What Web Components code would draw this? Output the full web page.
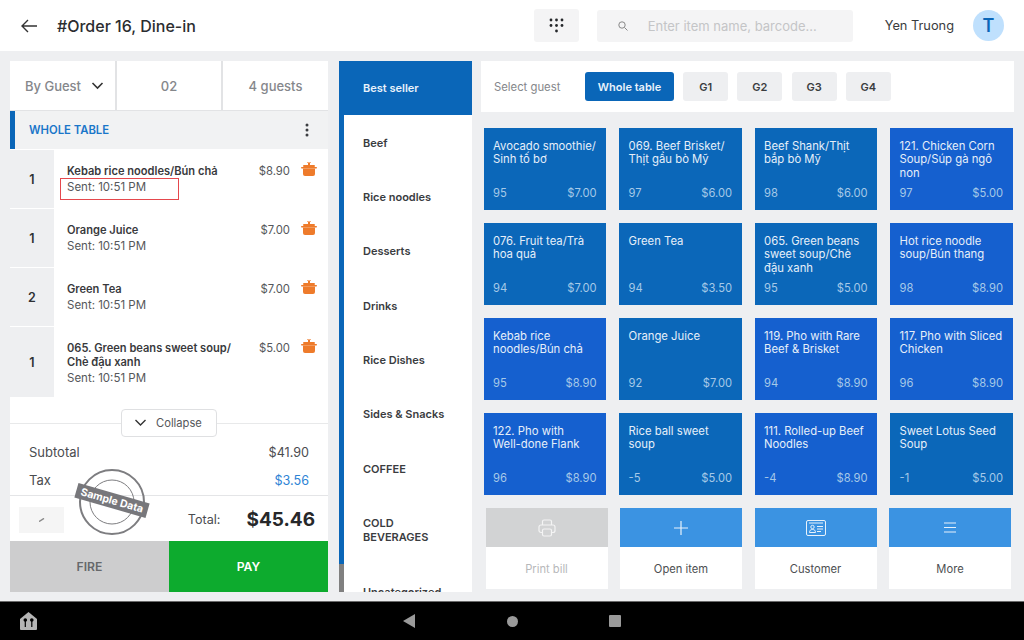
<!DOCTYPE html>
<html>
<head>
<meta charset="utf-8">
<title>Order 16</title>
<style>
  html, body {
    margin: 0;
    height: 100%;
    overflow: hidden;
    background: #eeeff1;
    font-family: Inter, "Liberation Sans", sans-serif;
  }
  body {
    display: flex;
    flex-direction: column;
    height: 640px;
  }
</style>
</head>
<body>
<pos-top-bar></pos-top-bar>
<pos-main></pos-main>
<pos-nav-bar></pos-nav-bar>

<script>
/**
 * Data shown on the page.
 */
const orderItems = [
  { qty: 1, name: 'Kebab rice noodles/Bún chả', price: '$8.90', height: 58 },
  { qty: 1, name: 'Orange Juice', price: '$7.00', height: 58 },
  { qty: 2, name: 'Green Tea', price: '$7.00', height: 58 },
  { qty: 1, name: '065. Green beans sweet soup/ Chè đậu xanh', price: '$5.00', height: 70 }
]

const categories = ['Best seller', 'Beef', 'Rice noodles', 'Desserts', 'Drinks', 'Rice Dishes', 'Sides &amp; Snacks', 'COFFEE', 'COLD BEVERAGES', 'Uncategorized']

const tiles = [
  ['Avocado smoothie/ Sinh tố bơ', '95', '$7.00', 0], ['069. Beef Brisket/ Thịt gầu bò Mỹ', '97', '$6.00', 0], ['Beef Shank/Thịt bắp bò Mỹ', '98', '$6.00', 0], ['121. Chicken Corn Soup/Súp gà ngô non', '97', '$5.00', 1],
  ['076. Fruit tea/Trà hoa quả', '94', '$7.00', 0], ['Green Tea', '94', '$3.50', 0], ['065. Green beans sweet soup/Chè đậu xanh', '95', '$5.00', 0], ['Hot rice noodle soup/Bún thang', '98', '$8.90', 1],
  ['Kebab rice noodles/Bún chả', '95', '$8.90', 1], ['Orange Juice', '92', '$7.00', 0], ['119. Pho with Rare Beef &amp; Brisket', '94', '$8.90', 1], ['117. Pho with Sliced Chicken', '96', '$8.90', 1],
  ['122. Pho with <span style="white-space:nowrap">Well-done</span> Flank', '96', '$8.90', 1], ['Rice ball sweet soup', '-5', '$5.00', 0], ['111. Rolled-up Beef Noodles', '-4', '$8.90', 1], ['Sweet Lotus Seed Soup', '-1', '$5.00', 0]
]

const potIcon = `<svg width="16" height="15" viewBox="0 0 16 15" fill="#ee7b2b">
  <rect x="6" y="0" width="4" height="1" opacity=".6"/><rect x="7" y="1" width="2" height="2"/>
  <rect x="2" y="3" width="12" height="2" rx="1"/><rect x="0" y="5" width="16" height="1.5" rx=".7"/>
  <path d="M2 6.5h12V12a2 2 0 0 1-2 2H4a2 2 0 0 1-2-2z"/></svg>`

/**
 * Small helper, every element here only needs a shadow root filled once.
 *
 * @param {HTMLElement} el - The element.
 * @param {string} html - Markup with styles.
 */
function fill (el, html) {
  el.attachShadow({ mode: 'open' }).innerHTML = html
}

customElements.define('pos-top-bar', class extends HTMLElement {
  constructor () {
    super()
    const dots = [[0, 0], [5.5, 0], [11, 0], [0, 5.5], [5.5, 5.5], [11, 5.5], [5.5, 11]].map(([x, y]) => `<circle cx="${x + 2}" cy="${y + 2}" r="1.4"/>`).join('')
    fill(this, `<style>
      :host { display: flex; align-items: center; height: 51px; background: #fff; flex: none; }
      .back { margin-left: 20px; width: 18px; height: 14px; display: block; }
      h1 { margin: 0 0 0 19px; font-size: 16px; font-weight: 500; color: #2b2d30; flex: 1; white-space: nowrap; }
      .keys { width: 45px; height: 33px; background: #f4f4f5; border-radius: 3px; display: flex; align-items: center; justify-content: center; }
      .search { margin-left: 18px; width: 256px; height: 32px; background: #f4f4f5; border-radius: 3px; display: flex; align-items: center; box-sizing: border-box; padding-left: 21px; font-size: 13px; color: #c4c5c7; }
      .search svg { margin-right: 20px; }
      .user { margin-left: 32px; font-size: 12.8px; color: #3a3c40; }
      .avatar { margin: 0 20px 0 19px; width: 31px; height: 31px; border-radius: 50%; background: #bfe0fd; color: #0a66b8; font-size: 18px; font-weight: 600; display: flex; align-items: center; justify-content: center; }
    </style>
    <svg class="back" viewBox="0 0 18 14" fill="none" stroke="#333" stroke-width="1.4"><path d="M17 7H2M8 1 2 7l6 6"/></svg>
    <h1>#Order 16, Dine-in</h1>
    <div class="keys"><svg width="15" height="15" viewBox="0 0 15 15" fill="#26282b">${dots}</svg></div>
    <div class="search">
      <svg width="10" height="10" viewBox="0 0 10 10" fill="none" stroke="#888" stroke-width="1"><circle cx="4" cy="4" r="3.2"/><path d="m6.5 6.5 3 3"/></svg>
      Enter item name, barcode...
    </div>
    <div class="user">Yen Truong</div>
    <div class="avatar">T</div>`)
  }
})

customElements.define('pos-main', class extends HTMLElement {
  constructor () {
    super()
    fill(this, `<style>
      :host { display: flex; flex: none; height: 550px; box-sizing: border-box; padding: 10px 10px 9px 10px; }
      .right { margin-left: 9px; width: 533px; display: flex; flex-direction: column; }
    </style>
    <pos-order-panel></pos-order-panel>
    <pos-category-list></pos-category-list>
    <div class="right">
      <pos-guest-bar></pos-guest-bar>
      <pos-item-grid></pos-item-grid>
      <pos-action-row></pos-action-row>
    </div>`)
  }
})

customElements.define('pos-order-panel', class extends HTMLElement {
  constructor () {
    super()
    const rows = orderItems.map((item, i) => `
      <div class="row" style="height:${item.height}px">
        <div class="qty">${item.qty}</div>
        <div class="info">
          <div class="name">${item.name}</div>
          <div class="sent">Sent: 10:51 PM</div>
        </div>
        <div class="price">${item.price}</div>
        <div class="pot">${potIcon}</div>
      </div>`).join('')
    fill(this, `<style>
      :host { display: flex; flex-direction: column; width: 318px; height: 531px; position: relative; background: #fff; color: #2f3134; flex: none; }
      .tabs { display: flex; height: 50px; background: #e2e3e5; gap: 2px; padding-bottom: 1px; box-sizing: border-box; flex: none; }
      .tab { background: #fff; display: flex; align-items: center; justify-content: center; font-size: 13px; font-weight: 500; color: #85878b; box-sizing: border-box; }
      .tab svg { margin-left: 10px; }
      .head { height: 38px; flex: none; background: #f1f2f3; border-left: 5px solid #0a66b8; box-sizing: border-box; display: flex; align-items: center; justify-content: space-between; padding: 0 19px 0 14px; font-size: 11.3px; font-weight: 600; color: #1976c9; margin-bottom: 1px; }
      .head svg { display: block; }
      .row { display: flex; box-sizing: border-box; margin-bottom: 1px; }
      .qty { width: 44px; background: #eeeff1; flex: none; display: flex; align-items: center; justify-content: center; font-size: 12.5px; font-weight: 600; box-sizing: border-box; }
      .info { width: 170px; margin-left: 13px; padding-top: 15px; box-sizing: border-box; }
      .name { font-size: 11.1px; font-weight: 600; line-height: 13.5px; color: #38393c; }
      .sent { font-size: 11.5px; line-height: 13.5px; margin-top: 2.5px; color: #55575a; }
      .price { margin-left: auto; padding-top: 15px; font-size: 11.3px; line-height: 13.5px; color: #55575a; }
      .pot { margin: 11px 11px 0 11px; }
      .list { flex: none; height: 274px; }
      .collapse-wrap { height: 0; border-top: 1.5px solid #e8e9ea; position: relative; margin-top: -1px; flex: none; }
      .collapse { position: absolute; left: 111px; top: -15px; width: 96px; height: 28px; box-sizing: border-box; background: #fff; border: 1px solid #dfe0e2; border-radius: 4px; display: flex; align-items: center; padding-left: 12px; font-size: 11.2px; color: #55575a; }
      .collapse svg { margin-right: 9px; }
      .sum { flex: none; height: 70.5px; padding: 0 19px; display: flex; flex-direction: column; font-size: 12.6px; color: #4a4c4f; box-sizing: border-box; }
      .line { display: flex; justify-content: space-between; height: 29px; align-items: center; }
      .line:first-child { margin-top: 14px; }
      .line span:first-child { font-size: 13px; }
      .tax { color: #2d83d5; }
      .total { flex: none; height: 46px; border-top: 1px solid #e4e5e7; box-sizing: border-box; display: flex; align-items: center; padding: 2px 13px 0 9px; }
      .scan { width: 45px; height: 26px; background: #f5f5f5; display: flex; align-items: center; justify-content: center; margin-top: 2px; }
      .tl { margin-left: auto; font-size: 12.6px; color: #4a4c4f; margin-top: 1px; }
      .amt { margin-left: 26px; font-size: 19px; font-weight: 700; color: #27282a; }
      .btns { flex: none; height: 51px; display: flex; font-size: 12.2px; font-weight: 600; }
      .btns div { flex: 1; display: flex; align-items: center; justify-content: center; }
      .fire { background: #cdcdce; color: #66686b; }
      .pay { background: #0dab2e; color: #fff; }
      .mark { position: absolute; left: 50px; top: 117px; width: 119px; height: 22px; box-sizing: border-box; border: 1px solid #e5484d; }
      .stamp { position: absolute; left: 65px; top: 407px; width: 76px; height: 68px; }
    </style>
    <div class="tabs">
      <div class="tab" style="width:105px;padding-left:4px">By Guest<svg width="13" height="8" viewBox="0 0 13 8" fill="none" stroke="#333" stroke-width="1.6"><path d="m1.5 1 5 5 5-5"/></svg></div>
      <div class="tab" style="width:104px">02</div>
      <div class="tab" style="width:105px">4 guests</div>
    </div>
    <div class="head">WHOLE TABLE<svg width="4" height="14" viewBox="0 0 4 14" fill="#3c3e41"><circle cx="2" cy="2" r="1.5"/><circle cx="2" cy="7" r="1.5"/><circle cx="2" cy="12" r="1.5"/></svg></div>
    <div class="list">${rows}</div>
    <div class="collapse-wrap"><div class="collapse"><svg width="13" height="8" viewBox="0 0 13 8" fill="none" stroke="#333" stroke-width="1.4"><path d="m1.5 1 5 5 5-5"/></svg>Collapse</div></div>
    <div class="sum">
      <div class="line"><span>Subtotal</span><span>$41.90</span></div>
      <div class="line"><span>Tax</span><span class="tax">$3.56</span></div>
    </div>
    <div class="total">
      <div class="scan"><svg width="6" height="4" viewBox="0 0 6 4"><path d="M0 3.6 5 .4" stroke="#8a8a8a" stroke-width="1.4"/></svg></div>
      <span class="tl">Total:</span><span class="amt">$45.46</span>
    </div>
    <div class="btns"><div class="fire">FIRE</div><div class="pay">PAY</div></div>
    <div class="mark"></div>
    <pos-stamp class="stamp"></pos-stamp>`)
  }
})

customElements.define('pos-stamp', class extends HTMLElement {
  constructor () {
    super()
    fill(this, `<style>
      :host { display: block; }
      svg { position: absolute; left: 0; top: 0; }
      .tag { position: absolute; left: 0; top: 25px; width: 74px; height: 15px; background: #77777b; color: #fff; font-size: 10.5px; font-weight: 700; line-height: 15px; text-align: center; transform: rotate(16deg); white-space: nowrap; }
    </style>
    <svg width="76" height="68" viewBox="0 0 76 68" fill="none" stroke="#7d7d80">
      <circle cx="37" cy="34" r="32" stroke-width="2"/>
      <circle cx="37" cy="34" r="22" stroke-width="1"/>
    </svg>
    <div class="tag">Sample Data</div>`)
  }
})

customElements.define('pos-category-list', class extends HTMLElement {
  constructor () {
    super()
    const rows = categories.map((c, i) => `<div class="cat${i === 0 ? ' on' : ''}">${c}</div>`).join('')
    fill(this, `<style>
      :host { display: block; flex: none; width: 133px; height: 531px; margin-left: 11px; position: relative; overflow: hidden; background: #fff; }
      .cat { box-sizing: border-box; padding: 20.2px 20px 20.2px 24px; font-size: 11px; font-weight: 600; line-height: 14px; color: #3a3c3f; }
      .on { background: #0a66b8; color: #e8f2fb; }
      .rail { position: absolute; left: 0; top: 0; bottom: 0; width: 5px; background: linear-gradient(#0a66b8 0, #0a66b8 503px, #808080 503px); }
    </style>
    <div class="rail"></div>${rows}`)
  }
})

customElements.define('pos-guest-bar', class extends HTMLElement {
  constructor () {
    super()
    fill(this, `<style>
      :host { display: flex; align-items: center; height: 51px; background: #fff; flex: none; padding-left: 13px; box-sizing: border-box; font-size: 11px; }
      .label { color: #85878b; width: 91px; font-size: 11.3px; }
      .b { height: 29px; width: 45px; margin-right: 9.2px; border-radius: 3px; background: #eeeff1; color: #3a3c3f; font-weight: 600; display: flex; align-items: center; justify-content: center; }
      .on { width: 89px; background: #0a66b8; color: #e8f2fb; }
    </style>
    <span class="label">Select guest</span>
    <div class="b on">Whole table</div><div class="b">G1</div><div class="b">G2</div><div class="b">G3</div><div class="b">G4</div>`)
  }
})

customElements.define('pos-item-grid', class extends HTMLElement {
  constructor () {
    super()
    const cells = tiles.map(([name, qty, price, alt]) => `
      <div class="tile${alt ? ' alt' : ''}">
        <div class="name">${name}</div>
        <div class="foot"><span>${qty}</span><span>${price}</span></div>
      </div>`).join('')
    fill(this, `<style>
      :host { display: grid; grid-template-columns: repeat(4, 122.5px); grid-auto-rows: 82px; column-gap: 13px; row-gap: 13px; flex: none; margin: 16px 0 0 2.5px; }
      .tile { background: #0b67b9; color: #e6eff9; padding: 12px 9.5px 10px 9.5px; box-sizing: border-box; display: flex; flex-direction: column; font-size: 11.3px; line-height: 13.3px; }
      .alt { background: #1560cf; }
      .name { flex: 1; margin-right: -2px; }
      .foot { display: flex; justify-content: space-between; font-size: 11.2px; color: #a6c9e8; line-height: 13px; }
    </style>${cells}`)
  }
})

customElements.define('pos-action-row', class extends HTMLElement {
  constructor () {
    super()
    const icons = {
      print: '<svg width="18" height="18" viewBox="0 0 18 18" fill="none" stroke="#f4f4f4" stroke-width="1.2"><path d="M4.5 6V2.500a1.500 1.500 0 0 1 1.500-1.500h6a1.500 1.500 0 0 1 1.500 1.500V6"/><path d="M4.500 13.500H3a2 2 0 0 1-2-2V8a2 2 0 0 1 2-2h12a2 2 0 0 1 2 2v3.500a2 2 0 0 1-2 2h-1.500"/><rect x="4.500" y="10" width="9" height="7" rx="1.500"/></svg>',
      plus: '<svg width="14" height="14" viewBox="0 0 14 14" stroke="#e8f2fb" stroke-width="1.200"><path d="M7 0v14M0 7h14"/></svg>',
      card: '<svg width="20" height="16" viewBox="0 0 20 16" fill="none" stroke="#e8f2fb"><rect x=".5" y=".5" width="19" height="15" rx="1.500"/><path d="M3 3h14M11 6.500h6M11 9h6M11 11.500h4"/><circle cx="6.500" cy="7" r="1.700"/><path d="M3.500 12.500c0-2 1-3 3-3s3 1 3 3z"/></svg>',
      more: '<svg width="12" height="11" viewBox="0 0 12 11" stroke="#e8f2fb" stroke-width="1.200"><path d="M0 1h12M0 5.500h12M0 10h12"/></svg>'
    }
    const acts = [['print', 'Print bill', 'off'], ['plus', 'Open item', ''], ['card', 'Customer', ''], ['more', 'More', '']]
    const cells = acts.map(([icon, label, cls]) => `
      <div class="act ${cls}">
        <div class="top">${icons[icon]}</div>
        <div class="lab">${label}</div>
      </div>`).join('')
    fill(this, `<style>
      :host { display: flex; gap: 12.5px; flex: none; height: 81px; margin: 13px 0 0 4.5px; }
      .act { width: 122px; display: flex; flex-direction: column; background: #fff; }
      .top { height: 39px; background: #3b93e2; display: flex; align-items: center; justify-content: center; }
      .off .top { background: #d2d3d4; }
      .lab { flex: 1; display: flex; align-items: center; justify-content: center; font-size: 11.2px; color: #4d4f52; padding-top: 1px; }
      .off .lab { color: #b7b8ba; }
    </style>${cells}`)
  }
})

customElements.define('pos-nav-bar', class extends HTMLElement {
  constructor () {
    super()
    fill(this, `<style>
      :host { display: block; position: relative; flex: none; height: 39px; background: #000; border-top: 1px solid #6a6a6a; box-sizing: border-box; }
      svg, .c, .s { position: absolute; }
      .home { left: 20px; top: 10px; }
      .tri { left: 403px; top: 12px; }
      .c { left: 507px; top: 14px; width: 11px; height: 11px; border-radius: 50%; background: #9a9a9a; }
      .s { left: 609px; top: 13px; width: 12px; height: 12px; border-radius: 1px; background: #9a9a9a; }
    </style>
    <svg class="home" width="17" height="18" viewBox="0 0 17 18"><path fill="#b5b5b5" d="M8.500 0 0 7v10a1 1 0 0 0 1 1h15a1 1 0 0 0 1-1V7z"/><path fill="#000" d="M3.500 8a1.800 1.800 0 0 1 3.600 0 1.800 1.800 0 0 1-1.200 1.700V15H4.700V9.700A1.800 1.800 0 0 1 3.500 8zM10 8a1.800 1.800 0 0 1 3.600 0 1.800 1.800 0 0 1-1.200 1.700V15h-1.200V9.700A1.800 1.800 0 0 1 10 8z"/></svg>
    <svg class="tri" width="12" height="14" viewBox="0 0 12 14"><path fill="#9a9a9a" d="M12 0v14L0 7z"/></svg>
    <div class="c"></div>
    <div class="s"></div>`)
  }
})
</script>
</body>
</html>
